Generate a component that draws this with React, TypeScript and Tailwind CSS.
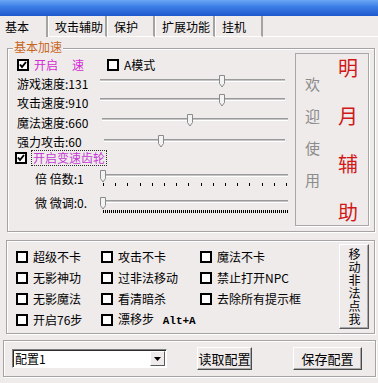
import React from 'react';

const FONT = "font-['Noto_Sans_CJK_SC','Liberation_Sans',sans-serif]";

function CheckBox({ checked = false }: { checked?: boolean }) {
  return (
    <span className="inline-flex w-[12px] h-[12px] shrink-0 items-center justify-center border-2 border-black bg-white">
      {checked && (
        <svg width="8" height="8" viewBox="0 0 8 8">
          <path d="M1 3.5 L3 6 L7 1" stroke="#000" strokeWidth="2" fill="none" />
        </svg>
      )}
    </span>
  );
}

interface SliderProps {
  width: number;
  height: number;
  trackY: number;
  thumbX: number;
  thumbY: number;
  trackStart?: number;
  ticks?: 'sparse' | 'dense';
  tickY?: number;
}

function Slider({ width, height, trackY, thumbX, thumbY, trackStart = 0, ticks, tickY = 0 }: SliderProps) {
  const marks: number[] = [];
  if (ticks === 'sparse') {
    for (let x = 3; x <= width - 1; x += 12.2) marks.push(Math.round(x));
  } else if (ticks === 'dense') {
    for (let x = 3; x <= width - 1; x += 2) marks.push(x);
  }
  const tw = width - trackStart;
  return (
    <svg width={width} height={height} className="block shrink-0">
      <rect x={trackStart} y={trackY - 1} width={tw} height={1} fill="#9a9a9a" />
      <rect x={trackStart} y={trackY} width={tw} height={1} fill="#c4c4c4" />
      <rect x={trackStart} y={trackY + 1} width={tw} height={1} fill="#ffffff" />
      {marks.map((m, i) => (
        <rect key={i} x={m} y={tickY} width={1} height={3} fill="#000" />
      ))}
      <path
        d={`M${thumbX + 0.5},${thumbY + 0.5} h5 v8 l-2.5,3.5 l-2.5,-3.5 z`}
        fill="#f3f3f3"
        stroke="#8a8a8a"
        strokeWidth="1"
      />
    </svg>
  );
}

const groupBox = 'relative border border-[#a5a3a3] shadow-[inset_1px_1px_0_#ffffff,1px_1px_0_#ffffff]';

const options: { label: React.ReactNode }[][] = [
  [{ label: '超级不卡' }, { label: '无影神功' }, { label: '无影魔法' }, { label: '开启76步' }],
  [
    { label: '攻击不卡' },
    { label: '过非法移动' },
    { label: '看清暗杀' },
    {
      label: (
        <>
          漂移步 <span className="ml-[6px] font-['Liberation_Mono',monospace] text-[11px] font-bold">Alt+A</span>
        </>
      ),
    },
  ],
  [{ label: '魔法不卡' }, { label: '禁止打开NPC' }, { label: '去除所有提示框' }],
];

const colWidths = ['w-[85px]', 'w-[99px]', 'w-[130px]'];

export default function App() {
  return (
    <div className={`w-[378px] h-[383px] overflow-hidden bg-[#efebeb] text-[12px] text-black ${FONT}`}>
      {/* title bar strip + tabs */}
      <div className="pt-[16px] bg-[linear-gradient(to_bottom,#6aa6f4_0px,#3a7ce6_7px,#1f58cc_16px,#efebeb_16px)]">
        <div className="flex h-[21px] items-stretch leading-none bg-[#efebeb]">
          <div className="flex w-[48px] items-center pl-[5px] pt-[1px] border-r-2 border-r-[#a3a3a3]">基本</div>
          {[
            ['攻击辅助', 'w-[59px]'],
            ['保护', 'w-[48px]'],
            ['扩展功能', 'w-[60px]'],
            ['挂机', 'w-[48px]'],
          ].map(([t, w]) => (
            <div
              key={t}
              className={`flex ${w} items-center pl-[6px] pt-[2px] border-l border-l-white border-r-2 border-r-[#a3a3a3] border-b border-b-white`}
            >
              {t}
            </div>
          ))}
          <div className="flex-1 border-b border-b-white" />
        </div>
      </div>

      {/* group 1 */}
      <div className={`${groupBox} ml-[7px] mt-[11px] w-[368px] h-[184px] flex`}>
        <span className="absolute left-[5px] top-[-9px] bg-[#efebeb] px-[1px] text-[#c8661e] leading-[14px]">基本加速</span>

        <div className="w-[281px] flex flex-col pl-[9px] pt-[9px] leading-none">
          <div className="flex h-[14px] items-center">
            <div className="flex w-[90px] items-center gap-[5px]">
              <CheckBox checked />
              <span className="text-[#d22cd2]">开启</span>
              <span className="ml-[9px] text-[#d22cd2]">速</span>
            </div>
            <div className="flex items-center gap-[5px]">
              <CheckBox />
              <span>A模式</span>
            </div>
          </div>

          <div className="flex h-[20px] items-center">
            <span className="w-[83px] pt-[4px]">游戏速度:131</span>
            <Slider width={185} height={20} trackY={8} thumbX={119} thumbY={3} />
          </div>
          <div className="flex h-[20px] items-center">
            <span className="w-[83px] pt-[2px]">攻击速度:910</span>
            <Slider width={185} height={20} trackY={7} thumbX={119} thumbY={2} />
          </div>
          <div className="flex h-[20px] items-center">
            <span className="w-[85px] pt-[2px]">魔法速度:660</span>
            <Slider width={186} height={20} trackY={7} thumbX={85} thumbY={2} />
          </div>
          <div className="flex h-[18px] items-center">
            <span className="w-[87px] pt-[2px]">强力攻击:60</span>
            <Slider width={181} height={18} trackY={8} thumbX={54} thumbY={3} />
          </div>

          <div className="flex h-[16px] items-center gap-[4px] ml-[-2px]">
            <CheckBox checked />
            <span className="border border-dotted border-[#2a2a2a] px-[1px] py-[1px] text-[#c43ad4]">开启变速齿轮</span>
          </div>

          <div className="flex h-[26px] items-center pl-[18px]">
            <span className="w-[65px]">倍 倍数:1</span>
            <Slider width={188} height={26} trackY={9} thumbX={0} thumbY={4} trackStart={3} ticks="sparse" tickY={17} />
          </div>
          <div className="flex h-[24px] items-center pl-[18px]">
            <span className="w-[65px] pb-[2px]">微 微调:0.</span>
            <Slider width={188} height={24} trackY={9} thumbX={0} thumbY={5} trackStart={3} ticks="dense" tickY={18} />
          </div>
        </div>

        <div className="ml-[6px] mt-[4px] flex w-[74px] h-[173px] border border-[#a8a6a6] shadow-[1px_1px_0_#ffffff]">
          <div className="ml-[9px] mt-[22px] flex flex-col gap-[16px] text-[15px] leading-[16px] text-[#8c8c8c]">
            <span>欢</span>
            <span>迎</span>
            <span>使</span>
            <span>用</span>
          </div>
          <div className="ml-[18px] mt-[4px] flex flex-col gap-[28px] text-[20px] leading-[20px] text-[#d01818]">
            <span>明</span>
            <span>月</span>
            <span>辅</span>
            <span>助</span>
          </div>
        </div>
      </div>

      {/* group 2 */}
      <div className={`${groupBox} ml-[6px] mt-[8px] w-[369px] h-[94px] flex`}>
        <div className="flex w-[332px] pl-[9px] pt-[5px]">
          {options.map((col, ci) => (
            <div key={ci} className={`${colWidths[ci]} flex flex-col`}>
              {col.map((o, ri) => (
                <div key={ri} className="flex h-[21px] items-center gap-[5px] leading-none">
                  <CheckBox />
                  <span className="whitespace-nowrap">{o.label}</span>
                </div>
              ))}
            </div>
          ))}
        </div>
        <div className="mt-[3px] flex w-[30px] h-[85px] items-center justify-center border border-t-white border-l-white border-r-[#5a5a5a] border-b-[#5a5a5a] shadow-[inset_-1px_-1px_0_#a9a9a9] text-[12px]">
          <span className="[writing-mode:vertical-rl] tracking-[1px] leading-[14px]">移动非法点我</span>
        </div>
      </div>

      {/* group 3 */}
      <div className={`${groupBox} ml-[3px] mt-[6px] w-[373px] h-[37px] flex items-center`}>
        <div className="ml-[8px] flex w-[155px] h-[19px] items-center border border-t-[#7f7f7f] border-l-[#7f7f7f] border-r-white border-b-white bg-white shadow-[inset_1px_1px_0_#2c2c2c]">
          <span className="flex-1 pl-[2px] pt-[1px] leading-none">配置1</span>
          <span className="mr-[1px] flex w-[15px] h-[15px] items-center justify-center bg-[#efebeb] border border-t-white border-l-white border-r-[#5a5a5a] border-b-[#5a5a5a]">
            <svg width="7" height="4" viewBox="0 0 7 4">
              <path d="M0 0 H7 L3.5 4 Z" fill="#000" />
            </svg>
          </span>
        </div>
        <div className="ml-[30px] flex w-[55px] h-[23px] items-center justify-center border border-t-white border-l-white border-r-[#4a4a4a] border-b-[#4a4a4a] shadow-[inset_-1px_-1px_0_#a9a9a9] text-[13px] leading-none">
          读取配置
        </div>
        <div className="ml-[41px] flex w-[69px] h-[23px] items-center justify-center border border-t-white border-l-white border-r-[#4a4a4a] border-b-[#4a4a4a] shadow-[inset_-1px_-1px_0_#a9a9a9] text-[13px] leading-none">
          保存配置
        </div>
      </div>
    </div>
  );
}
